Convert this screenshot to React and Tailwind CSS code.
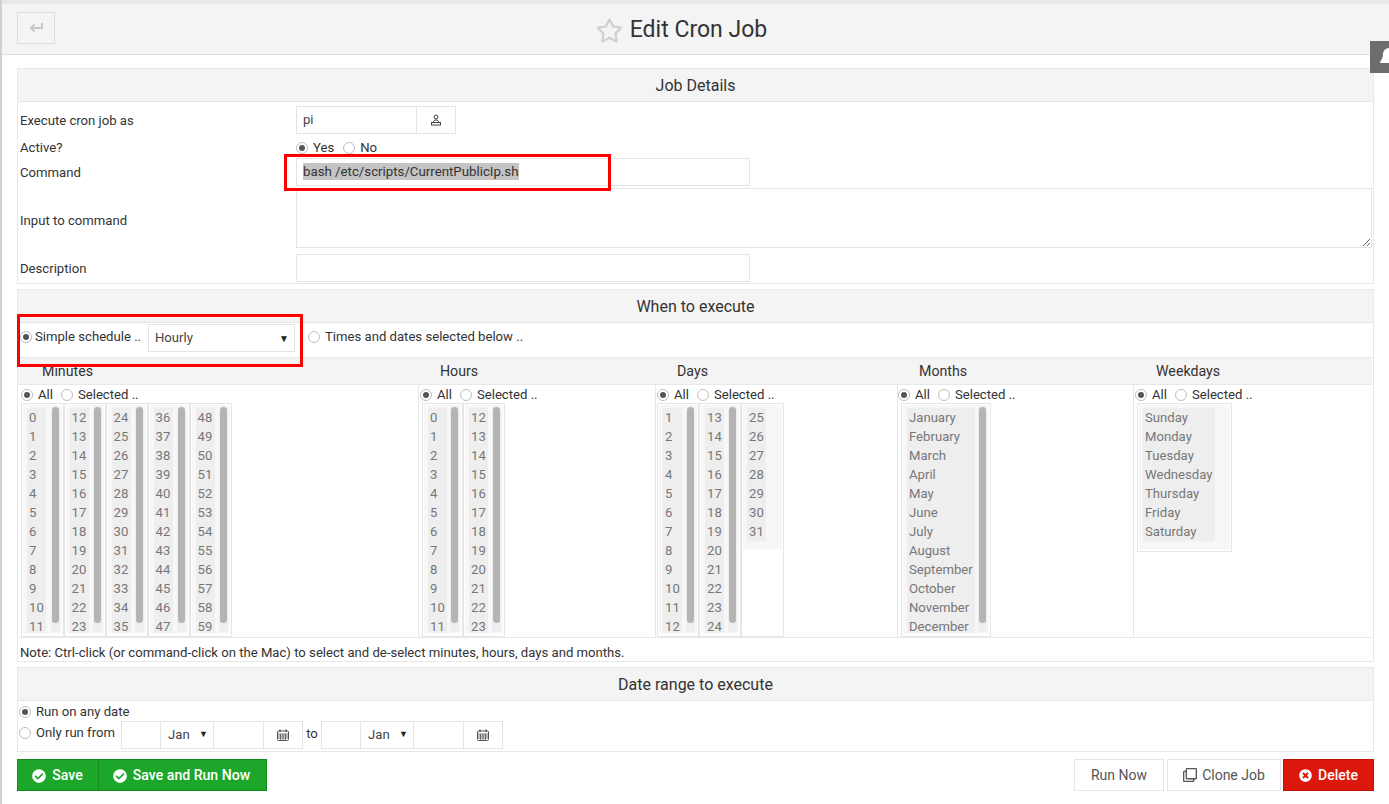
import React from "react";
import { FaCheckCircle, FaTimesCircle, FaRegClone, FaRegStar } from "react-icons/fa";

const range = (from, to) => {
  const out = [];
  for (let i = from; i <= to; i++) out.push(String(i));
  return out;
};

const months = ["January", "February", "March", "April", "May", "June", "July", "August", "September", "October", "November", "December"];
const weekdays = ["Sunday", "Monday", "Tuesday", "Wednesday", "Thursday", "Friday", "Saturday"];

const Radio = ({ on }) => (
  <span className="w-[12px] h-[12px] shrink-0 rounded-full border border-[#bdbdbd] bg-white flex items-center justify-center">
    {on && <span className="w-[6px] h-[6px] rounded-full bg-[#555]" />}
  </span>
);

const RadioLabel = ({ on, tight, children, className = "" }) => (
  <span className={`flex items-center ${tight ? "gap-[3px]" : "gap-[5px]"} ${className}`}>
    <Radio on={on} />
    <span>{children}</span>
  </span>
);

const CalendarIcon = () => (
  <svg width="12" height="12" viewBox="0 0 12 12" fill="none" stroke="#555" strokeWidth="1">
    <rect x="0.5" y="2" width="11" height="9.5" rx="1" />
    <path d="M1 5h10M1 7h10M1 9h10M3.5 5v6M6 5v6M8.5 5v6" strokeWidth="0.8" />
    <path d="M3 0.5v2.5M9 0.5v2.5" strokeWidth="1.4" />
  </svg>
);

const UserIcon = () => (
  <svg width="12" height="12" viewBox="0 0 12 12" fill="none" stroke="#444" strokeWidth="1">
    <circle cx="6" cy="3" r="2" />
    <path d="M3.5 8c0-1.5 1-2 2.5-2s2.5 .5 2.5 2" />
    <rect x="1.5" y="8.5" width="9" height="2.5" />
  </svg>
);

const SectionHeader = ({ children }) => (
  <div className="h-[33px] pt-[2px] bg-[#f4f4f4] border-b border-[#e6e6e6] flex items-center justify-center text-[16px] text-[#333]">
    {children}
  </div>
);

const Panel = ({ className = "", children }) => (
  <div className={`border border-[#e8e8e8] ${className}`}>{children}</div>
);

// one fake multi-select, the scroll track is only there when the list overflows
const ListBox = ({ items, width, textWidth, scroll = true, thumb = 216 }) => (
  <div className="border border-[#e6e6e6] h-[234px] p-[1px] shrink-0" style={{ width }}>
    <div className={`relative overflow-hidden flex justify-between bg-[#f7f7f7] pl-[4px] pt-[3px] ${scroll ? "h-[228px]" : "h-[144px]"}`}>
      <div className="bg-[#eee] self-start" style={{ width: textWidth }}>
        {items.map((item) => (
          <div key={item} className="h-[19px] leading-[19px] pl-[2px] text-[#777] whitespace-nowrap">
            {item}
          </div>
        ))}
      </div>
      {scroll && (
        <div className="w-[9px] mr-[2px] -mt-[2px] bg-[#eee] rounded-[4px] px-[1px] pt-[1px] h-[226px] shrink-0">
          <div className="w-[7px] rounded-[4px] bg-[#b4b4b4]" style={{ height: thumb }} />
        </div>
      )}
    </div>
  </div>
);

const ScheduleColumn = ({ title, width, titleClass, radioClass, listClass = "pl-[3px]", last, children }) => (
  <div className="shrink-0 flex flex-col" style={{ width }}>
    <div className={`h-[27px] pt-[2px] shrink-0 bg-[#f4f4f4] border-b border-[#e8e8e8] flex items-center text-[14.2px] text-[#333] ${titleClass}`}>
      {title}
    </div>
    <div className={`flex-1 ${last ? "" : "border-r border-[#e8e8e8]"}`}>
      <div className={`h-[18px] pt-[2px] flex items-center gap-[8px] text-[#333] ${radioClass}`}>
        <RadioLabel on>All</RadioLabel>
        <RadioLabel>Selected ..</RadioLabel>
      </div>
      <div className={`flex ${listClass}`}>{children}</div>
    </div>
  </div>
);

const TextBox = ({ className = "", children }) => (
  <div className={`h-[28px] border border-[#e4e4e4] bg-white flex items-center px-[6px] text-[#444] ${className}`}>
    {children}
  </div>
);

const DatePick = () => (
  <div className="flex h-[28px] border border-[#e4e4e4]">
    <div className="w-[39px] border-r border-[#e4e4e4]" />
    <div className="w-[53px] border-r border-[#e4e4e4] flex items-center justify-between pl-[7px] pr-[5px] text-[#444]">
      Jan <span className="text-[9px] text-[#222]">▼</span>
    </div>
    <div className="w-[50px] border-r border-[#e4e4e4]" />
    <div className="w-[38px] flex items-center justify-center">
      <CalendarIcon />
    </div>
  </div>
);

export default function App() {
  return (
    <div className="relative h-[804px] overflow-hidden bg-white border-l-2 border-[#d0d0d0] text-[13.13px] text-[#333] font-['Roboto',sans-serif]">
      <div className="h-[4px] bg-[#e8e8e8] -ml-[2px]" />

      {/* title bar */}
      <div className="relative h-[51px] bg-[#f4f4f4] border-b border-[#dedede] flex items-center justify-center pr-[28px] pt-[2px]">
        <div className="absolute left-[15px] top-[8px] w-[38px] h-[32px] border border-[#ddd] flex items-center justify-center">
          <svg width="14" height="12" viewBox="0 0 14 12" fill="none" stroke="#c8c8c8" strokeWidth="2">
            <path d="M13 1v5H2M5.5 2.5 2 6l3.5 3.5" />
          </svg>
        </div>
        <FaRegStar className="text-[#d0d0d0] mr-[7px]" size={27} />
        <span className="text-[23px] text-[#333]">Edit Cron Job</span>
      </div>

      <div className="pl-[15px] pr-[15px] pt-[13px]">
        <Panel>
          <SectionHeader>Job Details</SectionHeader>
          <div className="flex items-center h-[36px] pl-[2px]">
            <div className="w-[276px] pt-[2px]">Execute cron job as</div>
            <TextBox className="w-[121px]">pi</TextBox>
            <div className="w-[39px] h-[28px] border border-l-0 border-[#e4e4e4] flex items-center justify-center">
              <UserIcon />
            </div>
          </div>
          <div className="flex items-center h-[18px] pl-[2px]">
            <div className="w-[276px] pt-[2px]">Active?</div>
            <div className="flex items-center gap-[9px] pt-[2px]">
              <RadioLabel on>Yes</RadioLabel>
              <RadioLabel>No</RadioLabel>
            </div>
          </div>
          <div className="flex items-center h-[32px] pl-[2px]">
            <div className="w-[276px] pt-[2px]">Command</div>
            <TextBox className="w-[454px]">
              <span className="-mt-[2px] bg-[#c4c4c4] text-[#333] text-[13.25px] leading-[17px]">bash /etc/scripts/CurrentPublicIp.sh</span>
            </TextBox>
          </div>
          <div className="flex items-center h-[62px] pl-[2px]">
            <div className="w-[276px] pt-[4px]">Input to command</div>
            <textarea readOnly className="w-[1076px] h-[60px] -mt-[2px] border border-[#e4e4e4] bg-white" />
          </div>
          <div className="flex items-center h-[33px] pl-[2px] pt-[3px]">
            <div className="w-[276px] pt-[2px]">Description</div>
            <TextBox className="w-[454px]" />
          </div>
        </Panel>

        <Panel className="mt-[5px]">
          <SectionHeader>When to execute</SectionHeader>
          <div className="h-[34px] flex items-start pl-[2px] text-[#333]">
            <RadioLabel on tight className="h-[28px] w-[128px]">Simple schedule ..</RadioLabel>
            <div className="mt-[1px] w-[147px] h-[28px] border border-[#e4e4e4] flex items-center justify-between pl-[6px] pr-[5px] text-[#444]">
              Hourly <span className="text-[10px] text-[#222]">▼</span>
            </div>
            <RadioLabel className="h-[28px] ml-[13px]">Times and dates selected below ..</RadioLabel>
          </div>
          <div className="border-t border-b border-[#e8e8e8] flex h-[281px] overflow-hidden">
            <ScheduleColumn title="Minutes" width={401} titleClass="pl-[24px]" radioClass="pl-[3px]">
              <ListBox items={range(0, 11)} width={42.5} textWidth={19} />
              <ListBox items={range(12, 23)} width={42} textWidth={19} />
              <ListBox items={range(24, 35)} width={42} textWidth={19} />
              <ListBox items={range(36, 47)} width={42} textWidth={19} />
              <ListBox items={range(48, 59)} width={42} textWidth={19} />
            </ScheduleColumn>
            <ScheduleColumn title="Hours" width={237} titleClass="pl-[21px]" radioClass="pl-[1px]">
              <ListBox items={range(0, 11)} width={41} textWidth={19} />
              <ListBox items={range(12, 23)} width={42} textWidth={19} />
            </ScheduleColumn>
            <ScheduleColumn title="Days" width={242} titleClass="pl-[21px]" radioClass="pl-[1px]" listClass="pl-[1px]">
              <ListBox items={range(1, 12)} width={42} textWidth={19} />
              <ListBox items={range(13, 24)} width={42} textWidth={19} />
              <ListBox items={range(25, 31)} width={43} textWidth={19} scroll={false} />
            </ScheduleColumn>
            <ScheduleColumn title="Months" width={236} titleClass="pl-[21px]" radioClass="pl-[0px]">
              <ListBox items={months} width={90} textWidth={68} />
            </ScheduleColumn>
            <ScheduleColumn title="Weekdays" width={238} titleClass="pl-[22px]" radioClass="pl-[1px]" last>
              <div className="border border-[#e6e6e6] w-[95px] h-[149px] p-[1px]">
                <div className="bg-[#f7f7f7] pl-[4px] pt-[3px] h-[144px]">
                  <div className="bg-[#eee] w-[72px]">
                    {weekdays.map((d) => (
                      <div key={d} className="h-[19px] leading-[19px] pl-[2px] text-[#777]">{d}</div>
                    ))}
                  </div>
                </div>
              </div>
            </ScheduleColumn>
          </div>
          <div className="h-[23px] pt-[6px] flex items-center pl-[2px] text-[#333]">
            Note: Ctrl-click (or command-click on the Mac) to select and de-select minutes, hours, days and months.
          </div>
        </Panel>

        <Panel className="mt-[5px]">
          <SectionHeader>Date range to execute</SectionHeader>
          <div className="h-[19px] flex items-center pl-[1px] pt-[2px]">
            <RadioLabel on>Run on any date</RadioLabel>
          </div>
          <div className="h-[31px] flex items-start pt-[1px] pl-[1px]">
            <RadioLabel className="w-[102px] h-[24px]">Only run from</RadioLabel>
            <DatePick />
            <span className="w-[18px] text-center leading-[26px]">to</span>
            <DatePick />
          </div>
        </Panel>

        <div className="mt-[7px] flex justify-between">
          <div className="flex h-[32px] text-white text-[14.1px] font-medium">
            <button className="w-[82px] bg-[#1ca72a] border border-[#128a1e] flex items-center justify-center gap-[6px] pt-[1px] pr-[1px]">
              <FaCheckCircle size={14} /> Save
            </button>
            <button className="w-[168px] bg-[#1ca72a] border border-l-0 border-[#128a1e] flex items-center justify-center gap-[6px] pt-[1px] pr-[2px]">
              <FaCheckCircle size={14} /> Save and Run Now
            </button>
          </div>
          <div className="flex h-[32px] text-[14px] text-[#555]">
            <button className="w-[90px] border border-[#e6e6e6] bg-white">Run Now</button>
            <button className="ml-[3px] w-[114px] border border-[#e6e6e6] bg-white flex items-center justify-center gap-[5px]">
              <FaRegClone size={14} /> Clone Job
            </button>
            <button className="ml-[2px] w-[91px] bg-[#db180b] border border-[#c01408] text-white font-medium flex items-center justify-center gap-[6px]">
              <FaTimesCircle size={13} /> Delete
            </button>
          </div>
        </div>
      </div>

      {/* red annotations drawn over the screenshot */}
      <div className="absolute left-[282px] top-[154px] w-[327px] h-[37px] border-[3px] border-[#f00]" />
      <div className="absolute left-[15px] top-[314px] w-[286px] h-[53px] border-[3px] border-[#f00]" />

      {/* notification tab cut off by the window */}
      <div className="absolute left-[1368px] top-[41px] w-[19px] h-[32px] bg-[#6b6e6d] overflow-hidden">
        <svg className="absolute left-[9px] top-[6px]" width="20" height="20" viewBox="0 0 20 20" fill="#fff">
          <path d="M10 1a6 6 0 0 0-6 6c0 5-3 7-3 9h18c0-2-3-4-3-9a6 6 0 0 0-6-6z" />
        </svg>
      </div>
    </div>
  );
}
